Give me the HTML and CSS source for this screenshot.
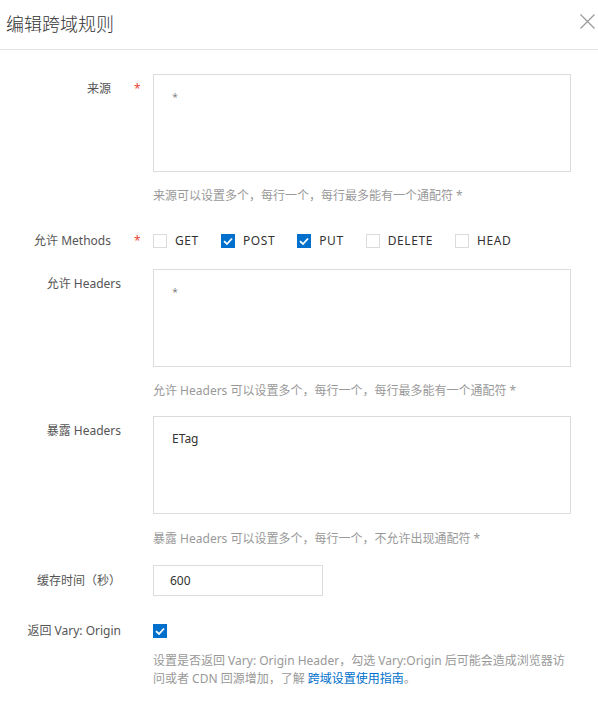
FILE: index.html
```html
<!DOCTYPE html>
<html lang="zh-CN">
<head>
<meta charset="utf-8">
<title>编辑跨域规则</title>
<link rel="stylesheet" href="styles.css">
</head>
<body>
<div class="dialog">
  <div class="header">
    <div class="title">编辑跨域规则</div>
    <svg class="close" width="15" height="15" viewBox="0 0 15 15"><path d="M0.5 0.5L14.5 14.5M14.5 0.5L0.5 14.5" stroke="#999" stroke-width="1.2" fill="none"/></svg>
  </div>
  <div class="body">
    <div class="item item-origin">
      <div class="label req"><span>来源</span><span class="star">*</span></div>
      <div class="control">
        <div class="textarea"><span class="ast">*</span></div>
        <div class="help">来源可以设置多个，每行一个，每行最多能有一个通配符 *</div>
      </div>
    </div>
    <div class="item item-methods">
      <div class="label req"><span>允许 Methods</span><span class="star">*</span></div>
      <div class="control">
        <div class="checks">
          <label class="check"><span class="box"></span>GET</label>
          <label class="check"><span class="box on"><svg width="14" height="14" viewBox="0 0 14 14"><path d="M3 7.2L6 10L11 4.5" stroke="#fff" stroke-width="1.8" fill="none"/></svg></span>POST</label>
          <label class="check"><span class="box on"><svg width="14" height="14" viewBox="0 0 14 14"><path d="M3 7.2L6 10L11 4.5" stroke="#fff" stroke-width="1.8" fill="none"/></svg></span>PUT</label>
          <label class="check"><span class="box"></span>DELETE</label>
          <label class="check"><span class="box"></span>HEAD</label>
        </div>
      </div>
    </div>
    <div class="item item-headers">
      <div class="label"><span>允许 Headers</span></div>
      <div class="control">
        <div class="textarea"><span class="ast">*</span></div>
        <div class="help">允许 Headers 可以设置多个，每行一个，每行最多能有一个通配符 *</div>
      </div>
    </div>
    <div class="item item-expose">
      <div class="label"><span>暴露 Headers</span></div>
      <div class="control">
        <div class="textarea">ETag</div>
        <div class="help">暴露 Headers 可以设置多个，每行一个，不允许出现通配符 *</div>
      </div>
    </div>
    <div class="item item-cache">
      <div class="label"><span>缓存时间（秒）</span></div>
      <div class="control">
        <div class="input">600</div>
      </div>
    </div>
    <div class="item item-vary">
      <div class="label"><span>返回 Vary: Origin</span></div>
      <div class="control">
        <div class="checks"><span class="box on"><svg width="14" height="14" viewBox="0 0 14 14"><path d="M3 7.2L6 10L11 4.5" stroke="#fff" stroke-width="1.8" fill="none"/></svg></span></div>
        <p class="help help-vary">设置是否返回 Vary: Origin Header，勾选 Vary:Origin 后可能会造成浏览器访问或者 CDN 回源增加，了解 <a class="link" href="#">跨域设置使用指南</a>。</p>
      </div>
    </div>
  </div>
</div>
</body>
</html>
```

FILE: styles.css
```css
* { box-sizing: border-box; }
html, body { margin: 0; padding: 0; background: #fff; }
body {
  font-family: "Noto Sans", "Noto Sans CJK SC", sans-serif;
  font-size: 12px;
  color: #333;
  width: 598px;
}
.dialog { width: 598px; }
.header {
  height: 50px;
  border-bottom: 1px solid #e5e5e5;
  display: flex;
  align-items: center;
  justify-content: space-between;
  padding: 0 3px 0 6px;
}
.title {
  font-size: 18px;
  color: #333;
  font-family: "Noto Sans CJK SC", sans-serif;
  font-weight: 300;
  line-height: 24px;
  margin-top: -4px;
}
.close { margin-top: -6px; }
.body {
  padding-top: 24px;
  padding-bottom: 20px;
}
.item { display: flex; }
.label {
  width: 153px;
  flex: none;
  display: flex;
  justify-content: flex-end;
  padding-right: 32px;
  color: #555;
  line-height: 18px;
  padding-top: 6px;
}
.label.req { padding-right: 13px; }
.star { color: #e84738; margin-left: 23px; width: 6px; }
.control { width: 418px; }
.textarea {
  height: 98px;
  border: 1px solid #dcdcdc;
  padding: 13px 18px;
  line-height: 18px;
  color: #333;
}
.ast { font-weight: 300; color: #555; font-size: 11px; }
.help {
  color: #999;
  line-height: 18px;
  margin: 15px 0 0;
}
.item-origin { margin-bottom: 27px; }
.item-methods .label { padding-top: 0; }
.item-methods { margin-bottom: 19px; }
.item-headers { margin-bottom: 16px; }
.item-expose { margin-bottom: 17px; }
.item-expose .help { margin-top: 16px; }
.item-cache .label { padding-top: 7px; }
.item-cache { margin-bottom: 26px; }
.checks { display: flex; align-items: center; height: 18px; }
.check {
  display: flex;
  align-items: center;
  margin-right: 22px;
  color: #333;
  line-height: 18px;
  letter-spacing: 0.6px;
}
.box {
  width: 14px;
  height: 14px;
  border: 1px solid #dcdcdc;
  background: #fff;
  margin-right: 8px;
  display: inline-flex;
  flex: none;
}
.box.on { background: #0070cc; border-color: #0070cc; }
.box.on svg { margin: -1px; }
.input {
  width: 170px;
  height: 31px;
  border: 1px solid #dcdcdc;
  padding: 0 16px;
  line-height: 29px;
  color: #333;
}
.item-vary .label { padding-top: 0; }
.help-vary { margin-top: 12px; width: 418px; }
.link { color: #0070cc; text-decoration: none; }
```
